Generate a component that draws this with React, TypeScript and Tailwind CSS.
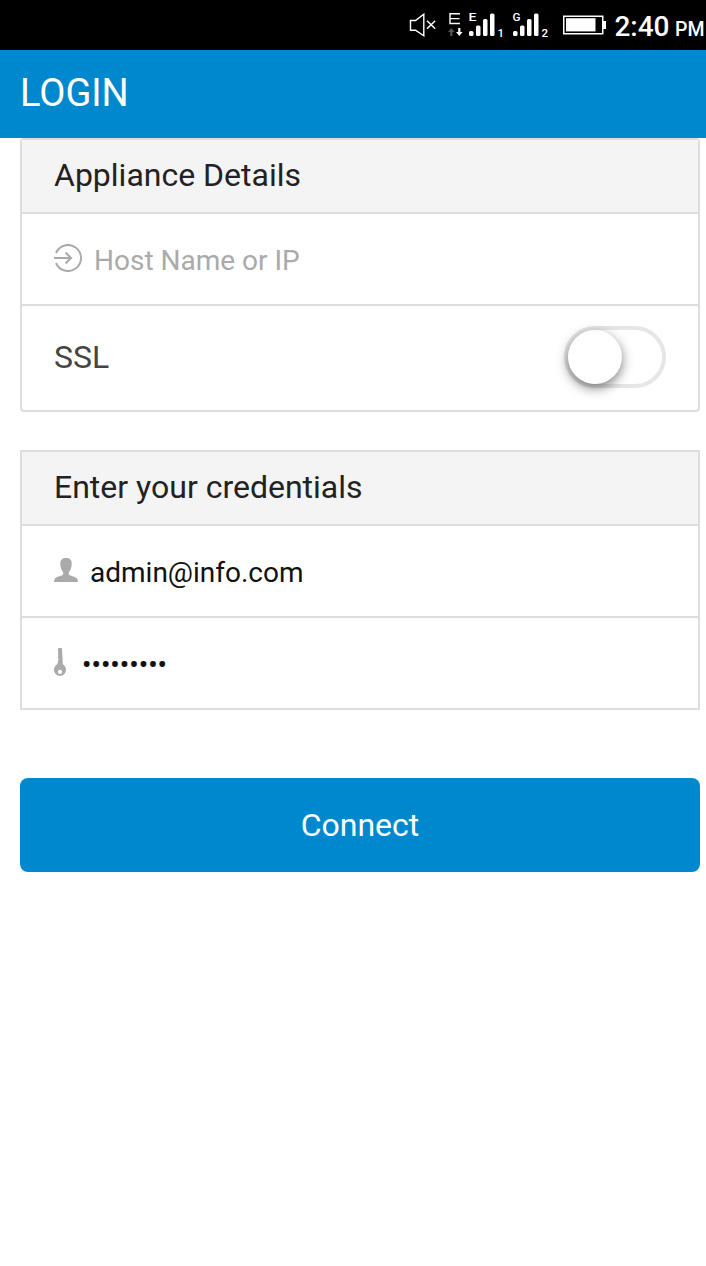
import type { ReactNode } from "react";

function MutedIcon() {
  return (
    <svg width="28" height="26" viewBox="0 0 28 26" fill="none" stroke="#fff" className="mr-[11px] shrink-0">
      <path d="M1.5 8.5H6.5L14.8 2.2V23.8L6.5 18.2H1.5Z" strokeWidth="1.4" />
      <path d="M18 8.8L26.2 16.8M26.2 8.8L18 16.8" strokeWidth="1.5" />
    </svg>
  );
}

function DataIcon() {
  return (
    <svg width="16" height="26" viewBox="0 0 16 26" className="mr-[4px] shrink-0">
      <path d="M12 1.7H2V11.5H12M2 6.6H11.5" fill="none" stroke="#fff" strokeWidth="1.4" />
      <path d="M3.3 16L6.6 20H4.4V24H2.2V20H0Z" fill="#555" />
      <path d="M11.3 24L8 20H10.2V16H12.4V20H14.6Z" fill="#fff" />
    </svg>
  );
}

function SignalIcon({ network, sim, className }: { network: string; sim: string; className: string }) {
  return (
    <svg width="36" height="26" viewBox="0 0 36 26" fill="#fff" className={className}>
      <text x="0.5" y="9.2" fontFamily="Roboto, sans-serif" fontWeight="500" fontSize="10.5" textLength="8" lengthAdjust="spacingAndGlyphs">{network}</text>
      <rect x="1" y="19" width="4.5" height="5" rx="1.5" />
      <rect x="8" y="13.5" width="4.5" height="10.5" rx="1.5" />
      <rect x="15" y="7" width="4.5" height="17" rx="1.5" />
      <rect x="22" y="1.5" width="4.5" height="22.5" rx="1.5" />
      <text x="29.5" y="24.5" fontFamily="Roboto, sans-serif" fontWeight="500" fontSize="11.5">{sim}</text>
    </svg>
  );
}

function BatteryIcon() {
  return (
    <svg width="44" height="20" viewBox="0 0 44 20" className="mr-[7px] shrink-0">
      <rect x=".75" y="1.25" width="39" height="17.5" fill="none" stroke="#fff" strokeWidth="1.5" />
      <rect x="3" y="3.2" width="29.5" height="13.2" fill="#fff" />
      <rect x="40" y="6" width="3" height="8" fill="#fff" />
    </svg>
  );
}

function EnterIcon() {
  return (
    <svg width="28" height="28" viewBox="0 0 28 28" fill="none" stroke="#aaa" strokeWidth="2" className="mr-3 mb-0.5 shrink-0">
      <path d="M2 9A13 13 0 1 1 2 19" />
      <path d="M0 14H17M11.5 8.5L17 14L11.5 19.5" />
    </svg>
  );
}

function PersonIcon() {
  return (
    <svg width="24" height="24" viewBox="0 0 24 24" fill="#aaa" className="mr-3 mb-0.5 shrink-0">
      <path d="M12 0C8.3 0 6.2 1.9 6.3 5.5C6.4 9.3 7 11 8.7 13.4C9.5 14.5 9.7 16.5 8.2 17.3C6.8 18 2.2 18.8.8 20.7C.2 21.6 0 22.7 0 24H24C24 22.7 23.8 21.6 23.2 20.7C21.8 18.8 17.2 18 15.8 17.3C14.3 16.5 14.5 14.5 15.3 13.4C17 11 17.6 9.3 17.7 5.5C17.8 1.9 15.7 0 12 0Z" />
    </svg>
  );
}

function KeyIcon() {
  return (
    <svg width="12" height="28" viewBox="0 0 12 28" fill="#aaa" className="mr-4 mb-0.5 shrink-0">
      <path fillRule="evenodd" d="M4.6 0H7.4L8 1L8.8 16.2C10.8 17.4 12 19.5 12 22A6 6 0 0 1 0 22C0 19.5 1.2 17.4 3.2 16.2L4 14.2V12.5L5 11.5L4 10.6V8.8L4.7 7.8L4 7V5.5L4.5 4.8L4 4V.9ZM6 21.8A2.1 2.1 0 1 0 6 26A2.1 2.1 0 0 0 6 21.8Z" />
    </svg>
  );
}

function Panel({ title, className, children }: { title: string; className: string; children: ReactNode }) {
  return (
    <section className={`ml-5 w-[680px] divide-y-2 divide-[#ddd] overflow-hidden border-2 border-[#ddd] ${className}`}>
      <h2 className="flex h-[74px] items-start bg-[#f4f4f4] px-8 text-[32px] leading-[70px] text-[#222]">{title}</h2>
      {children}
    </section>
  );
}

export default function App() {
  return (
    <div className="min-h-[1266px] bg-white font-['Roboto',sans-serif]">
      <div className="flex h-[50px] items-center justify-end bg-black pr-[1.5px] text-white">
        <MutedIcon />
        <DataIcon />
        <SignalIcon network="E" sim="1" className="mr-[8px] shrink-0" />
        <SignalIcon network="G" sim="2" className="mr-[15px] shrink-0" />
        <BatteryIcon />
        <div className="flex items-baseline pt-1 font-medium">
          <span className="text-[28px] leading-[50px]">2:40</span>
          <span className="ml-[5.5px] text-[19.5px]">PM</span>
        </div>
      </div>
      <header className="flex h-[88px] items-start bg-[#0088ce] px-5">
        <h1 className="text-[38px] leading-[86px] text-white">LOGIN</h1>
      </header>
      <Panel title="Appliance Details" className="rounded-[4px]">
        <div className="flex h-[92px] items-center px-8">
          <EnterIcon />
          <span className="pt-1 text-[28px] text-[#aaa]">Host Name or IP</span>
        </div>
        <div className="flex h-[104px] items-center justify-between px-8">
          <span className="pb-0.5 text-[32px] text-[#444]">SSL</span>
          <button type="button" role="switch" aria-checked="false" aria-label="SSL" className="mt-[-2px] h-[62px] w-[102px] rounded-full border-4 border-[#e6e6e6] bg-white">
            <span className="block size-[54px] rounded-full bg-white shadow-[0_4px_12px_rgba(0,0,0,0.5)]" />
          </button>
        </div>
      </Panel>
      <Panel title="Enter your credentials" className="mt-[38px]">
        <div className="flex h-[92px] items-center px-8">
          <PersonIcon />
          <span className="pt-1 text-[28px] text-[#111]">admin@info.com</span>
        </div>
        <div className="flex h-[90px] items-center px-8">
          <KeyIcon />
          <span className="pt-1 text-[28px] text-[#111] [-webkit-text-stroke:0.2px_#111]">•••••••••</span>
        </div>
      </Panel>
      <button type="button" className="mt-[68px] ml-5 h-[94px] w-[680px] rounded-[8px] bg-[#0088ce] text-[32px] text-white">
        Connect
      </button>
    </div>
  );
}
